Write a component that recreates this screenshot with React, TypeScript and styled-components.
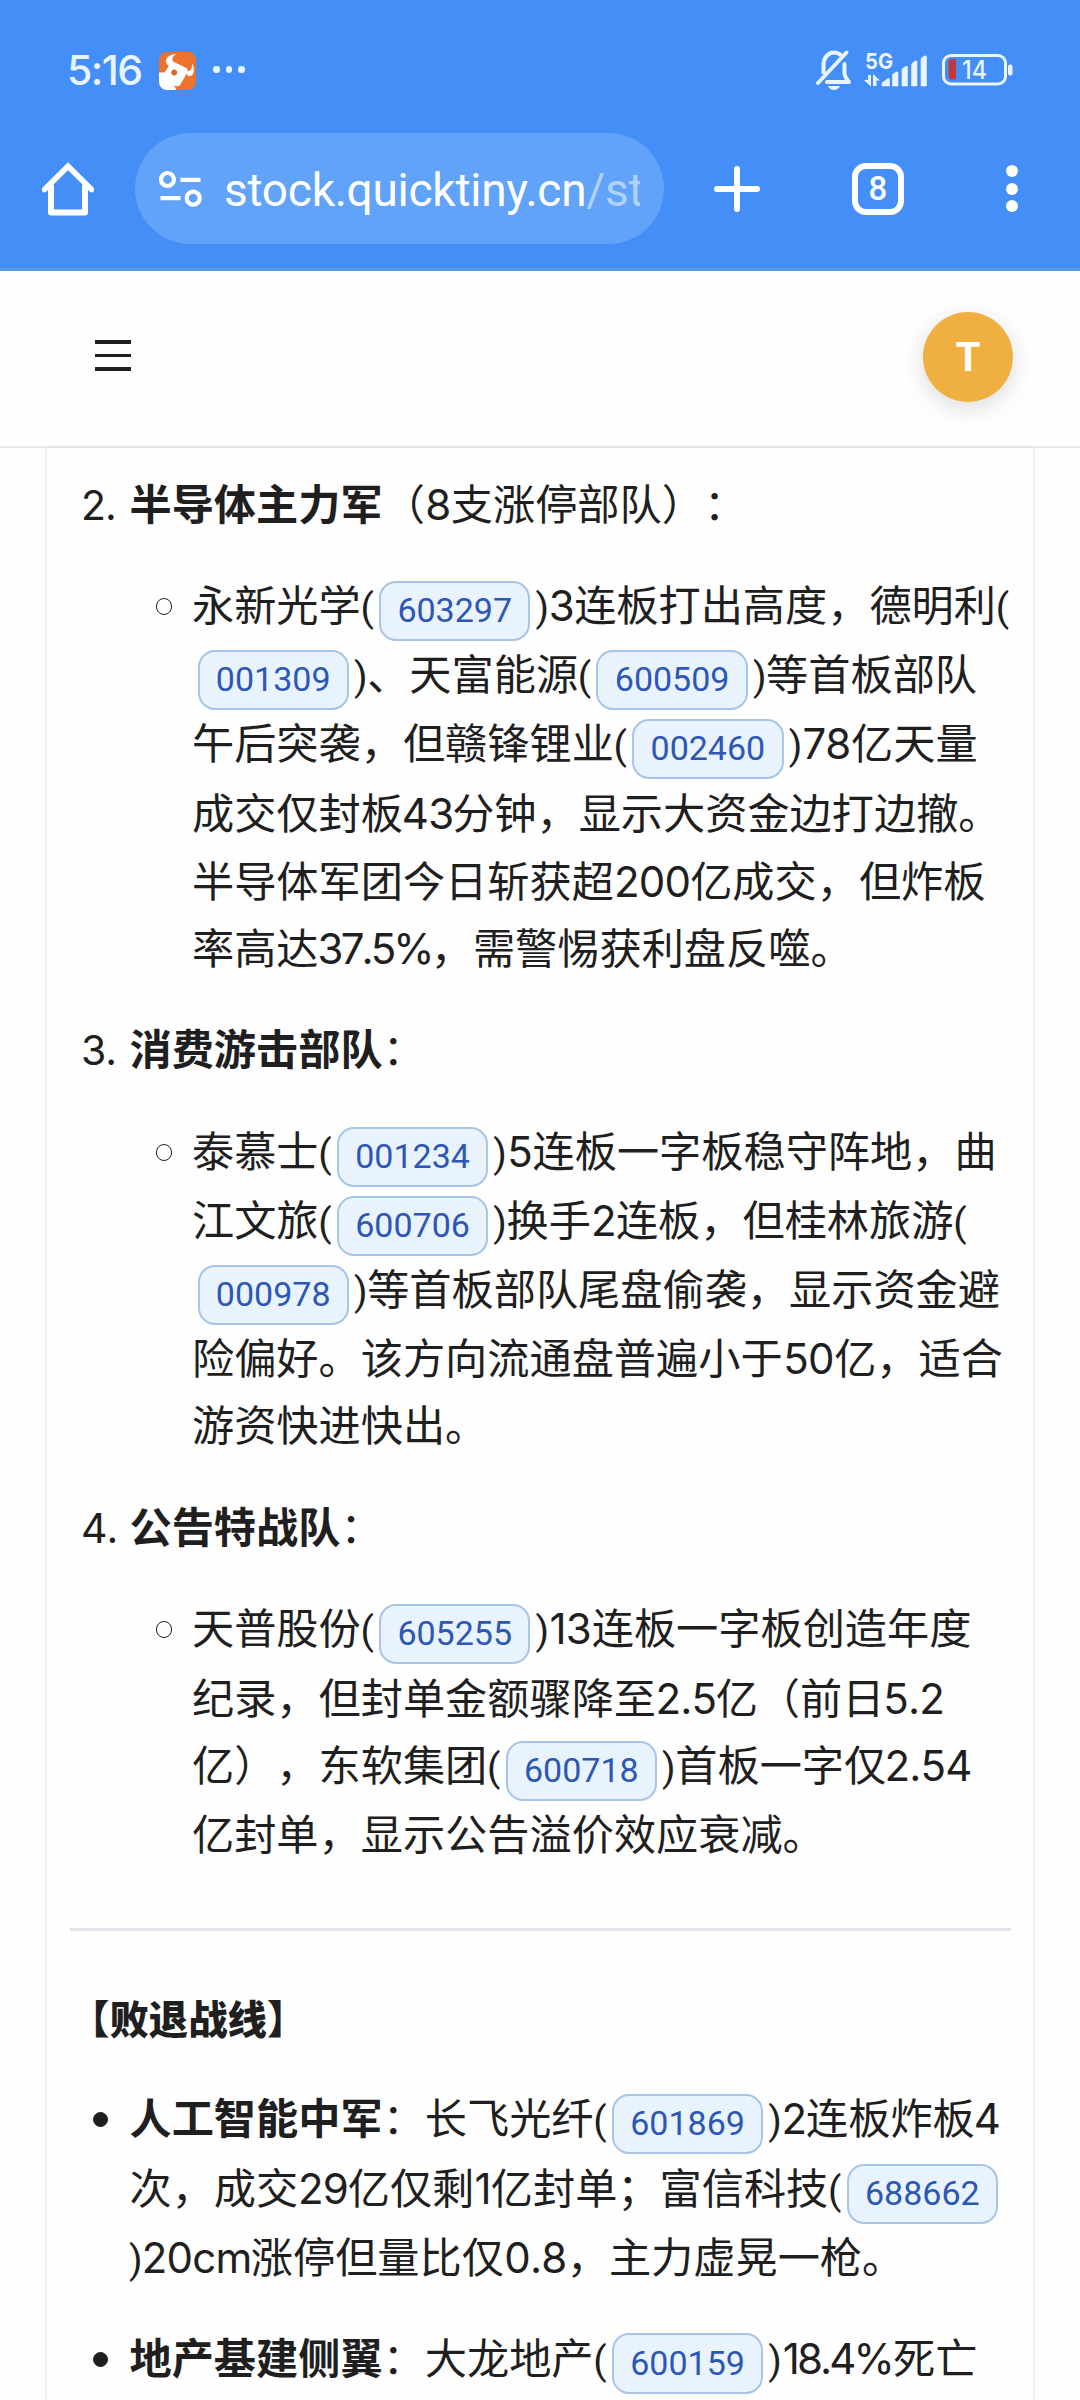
import React from 'react';
import styled, { createGlobalStyle } from 'styled-components';

const GlobalStyle = createGlobalStyle`
  * { box-sizing: border-box; }
  body { margin: 0; background: #fff; }
`;

const LATIN = '"Inter", "Roboto", sans-serif';
const CJK = '"Noto Sans CJK SC", sans-serif';

const Page = styled.div`
  width: 1080px;
  height: 2400px;
  overflow: hidden;
  display: flex;
  flex-direction: column;
  background: #fefefe;
  color: #1f1f1f;
  font-family: ${CJK};
`;

/* ---------- system + browser chrome ---------- */

const Chrome = styled.header`
  height: 271px;
  flex: none;
  background: #448ef7;
  border-bottom: 3px solid #5b98e4;
  color: #fff;
`;

const StatusBar = styled.div`
  height: 133px;
  padding: 8px 66px 0 67px;
  display: flex;
  align-items: center;
  color: #e8f4ff;
  svg { display: block; flex: none; }
`;

const Clock = styled.span`
  width: 92px;
  font: 500 41px/1 ${LATIN};
  letter-spacing: -1.5px;
`;

const MoreDots = styled.span`
  display: flex;
  gap: 6px;
  margin: -2px 0 0 17px;
  i { width: 6.5px; height: 6.5px; border-radius: 50%; background: #e8f4ff; }
`;

const StatusRight = styled.div`
  margin: -2px 0 0 auto;
  display: flex;
  align-items: center;
  gap: 12px;
`;

const Toolbar = styled.div`
  height: 111px;
  padding-left: 42px;
  display: flex;
  align-items: center;
  svg { display: block; flex: none; }
`;

const AddressBar = styled.div`
  width: 529px;
  height: 111px;
  margin-left: 41px;
  padding: 0 24px;
  border-radius: 56px;
  background: #60a3f8;
  display: flex;
  align-items: center;
`;

const Url = styled.div`
  width: 417px;
  margin: 3px 0 0 21px;
  overflow: hidden;
  white-space: nowrap;
  font: 400 46px/60px "Roboto", sans-serif;
  letter-spacing: -0.25px;
  span { color: #b0d1fb; }
`;

const TabCount = styled.div`
  width: 52px;
  height: 52px;
  margin-left: 92px;
  border: 6px solid #fff;
  border-radius: 14px;
  display: flex;
  align-items: center;
  justify-content: center;
  font: 500 33px/1 "Roboto", sans-serif;
`;

const MenuDots = styled.div`
  margin-left: 102px;
  display: flex;
  flex-direction: column;
  gap: 5.5px;
  i { width: 12px; height: 12px; border-radius: 50%; background: #fff; }
`;

/* ---------- site header ---------- */

const SiteHeader = styled.div`
  height: 177px;
  flex: none;
  padding: 0 67px 4px 95px;
  display: flex;
  align-items: center;
  justify-content: space-between;
  border-bottom: 2px solid #e7e7ec;
  background: #fefefe;
`;

const Burger = styled.div`
  width: 35.5px;
  margin-top: -2px;
  display: grid;
  gap: 10.2px;
  i { height: 3.6px; background: #1f1f1f; }
`;

const Avatar = styled.div`
  width: 90px;
  height: 90px;
  border-radius: 50%;
  background: #efaf41;
  box-shadow: 0 6px 22px rgba(0, 0, 0, 0.14);
  display: flex;
  align-items: center;
  justify-content: center;
  color: #fff;
  font: 700 39px/1 ${LATIN};
`;

/* ---------- article ---------- */

const Card = styled.main`
  flex: 1;
  margin: 0 45px;
  padding: 22px 23px 0;
  border: solid #efeff0;
  border-width: 0 2px;
  box-shadow: 0 0 8px rgba(0, 0, 0, 0.03);
`;

const BASELINE = 50;

const Line = styled.div<{ $h: number }>`
  height: ${(p) => p.$h}px;
  display: flex;
  align-items: baseline;
  white-space: pre;
  font-size: 42.2px;
  line-height: 1;
  font-kerning: none;
  text-spacing-trim: space-all;
  &::before {
    content: '';
    width: 0;
    height: ${BASELINE}px;
  }
`;

const Strong = styled.strong`
  font-weight: 700;
`;

const Ordinal = styled.span`
  width: 59.5px;
  padding-left: 11px;
  font-family: ${LATIN};
  font-size: 41px;
  font-weight: 400;
  letter-spacing: -1px;
`;

const Num = styled.span<{ $w: number; $tight?: boolean }>`
  width: ${(p) => p.$w}px;
  display: flex;
  justify-content: center;
  font-family: ${LATIN};
  font-size: 42px;
  letter-spacing: ${(p) => (p.$tight ? -2.9 : -0.8)}px;
`;

const Paren = styled.span`
  width: 12.8px;
  display: flex;
  justify-content: center;
  font-family: "Roboto", sans-serif;
  font-size: 39px;
`;

const Chip = styled.a`
  position: relative;
  top: 1px;
  width: 151.4px;
  height: 60.6px;
  margin: 0 5.5px;
  padding-top: 11.5px;
  flex: none;
  border: 2px solid #a6c5e7;
  border-radius: 17px;
  background: #e8f3fe;
  color: #2d57b5;
  text-align: center;
  font: 400 34px/32px "Roboto", sans-serif;
`;

const Entry = styled.div<{ $indent: number }>`
  display: grid;
  grid-template-columns: ${(p) => p.$indent}px 1fr;
`;

const Mark = styled.i<{ $solid?: boolean }>`
  justify-self: end;
  width: ${(p) => (p.$solid ? 15 : 16.5)}px;
  height: ${(p) => (p.$solid ? 15 : 16.5)}px;
  margin-top: ${(p) => (p.$solid ? 28 : 27.3)}px;
  margin-right: ${(p) => (p.$solid ? 22 : 20)}px;
  border-radius: 50%;
  border: 1.2px solid #1f1f1f;
  background: ${(p) => (p.$solid ? '#1f1f1f' : 'transparent')};
`;

const Divider = styled.hr`
  height: 3px;
  margin: 50px -1px 53px 0;
  border: 0;
  background: #e0e3e7;
`;

const SectionTitle = styled(Line)`
  font-size: 39.4px;
  font-weight: 900;
`;

type Part = string | { n: string; w: number } | { code: string } | { b: string };
type Row = { h: number; parts: Part[] };

const n = (text: string, w: number): Part => ({ n: text, w });
const code = (value: string): Part => ({ code: value });
const b = (text: string): Part => ({ b: text });

const renderPart = (part: Part, i: number) => {
  if (typeof part === 'string') {
    return part === '(' || part === ')' ? <Paren key={i}>{part}</Paren> : <span key={i}>{part}</span>;
  }
  if ('n' in part) return <Num key={i} $w={part.w} $tight={part.n.includes('%')}>{part.n}</Num>;
  if ('b' in part) return <Strong key={i}>{part.b}</Strong>;
  return <Chip key={i}>{part.code}</Chip>;
};

const Rows = ({ rows }: { rows: Row[] }) => (
  <div>
    {rows.map((row, i) => (
      <Line key={i} $h={row.h}>{row.parts.map(renderPart)}</Line>
    ))}
  </div>
);

const squads: { no: string; h: number; title: Part[]; rows: Row[] }[] = [
  {
    no: '2.',
    h: 101,
    title: [b('半导体主力军'), '（', n('8', 26), '支涨停部队）：'],
    rows: [
      { h: 69, parts: ['永新光学', '(', code('603297'), ')', n('3', 25.4), '连板打出高度，德明利', '('] },
      { h: 69, parts: [code('001309'), ')', '、天富能源', '(', code('600509'), ')', '等首板部队'] },
      { h: 70, parts: ['午后突袭，但赣锋锂业', '(', code('002460'), ')', n('78', 49.2), '亿天量'] },
      { h: 68, parts: ['成交仅封板', n('43', 49.2), '分钟，显示大资金边打边撤。'] },
      { h: 67, parts: ['半导体军团今日斩获超', n('200', 76.3), '亿成交，但炸板'] },
      { h: 101, parts: ['率高达', n('37.5%', 112.2), '，需警惕获利盘反噬。'] },
    ],
  },
  {
    no: '3.',
    h: 102,
    title: [b('消费游击部队'), '：'],
    rows: [
      { h: 69, parts: ['泰慕士', '(', code('001234'), ')', n('5', 26), '连板一字板稳守阵地，曲'] },
      { h: 69, parts: ['江文旅', '(', code('600706'), ')', '换手', n('2', 25), '连板，但桂林旅游', '('] },
      { h: 69, parts: [code('000978'), ')', '等首板部队尾盘偷袭，显示资金避'] },
      { h: 67, parts: ['险偏好。该方向流通盘普遍小于', n('50', 51.5), '亿，适合'] },
      { h: 102, parts: ['游资快进快出。'] },
    ],
  },
  {
    no: '4.',
    h: 101,
    title: [b('公告特战队'), '：'],
    rows: [
      { h: 70, parts: ['天普股份', '(', code('605255'), ')', n('13', 43), '连板一字板创造年度'] },
      { h: 67, parts: ['纪录，但封单金额骤降至', n('2.5', 59.6), '亿（前日', n('5.2', 58.6)] },
      { h: 68.5, parts: ['亿），东软集团', '(', code('600718'), ')', '首板一字仅', n('2.54', 83.5)] },
      { h: 78.5, parts: ['亿封单，显示公告溢价效应衰减。'] },
    ],
  },
];

const retreats: Row[][] = [
  [
    { h: 70, parts: [b('人工智能中军'), '：长飞光纤', '(', code('601869'), ')', n('2', 24.5), '连板炸板', n('4', 24)] },
    { h: 69, parts: ['次，成交', n('29', 49.5), '亿仅剩', n('1', 16.5), '亿封单；富信科技', '(', code('688662')] },
    { h: 100.5, parts: [')', n('20cm', 108.5), '涨停但量比仅', n('0.8', 62.8), '，主力虚晃一枪。'] },
  ],
  [
    { h: 76, parts: [b('地产基建侧翼'), '：大龙地产', '(', code('600159'), ')', n('18.4%', 111.5), '死亡'] },
  ],
];

const BullLogo = () => (
  <svg width="37" height="38" viewBox="0 0 37 38">
    <rect width="37" height="38" rx="8" fill="#ec722e" />
    <path
      fill="#fff"
      d="M17 2C10 2.500 6.500 6 7 10c.4 2.400 2 3 2.700 4L5.500 20.500H0V30a8 8 0 0 0 8 8h9l-.5-2-2-2.500c1.500 1 4.500 1 6.300 0L28 21l.5-4.500L14 9.500C12.500 6.500 14 4 17 2Z"
    />
    <path fill="#fff" d="M33.300 11.500c2 3.500 2 7.500.7 10.500-1.200 2.300-4 3-6.200.8l.7-4.300 2 .5c1.800-1.500 2.600-4 2.800-7.500Z" />
    <circle cx="15.200" cy="20.500" r="2.900" fill="#d9692c" />
  </svg>
);

const BellOff = () => (
  <svg width="36" height="40" viewBox="0 0 36 40" fill="none" stroke="#e8f4ff" strokeWidth="4">
    <path d="M7.500 24v-9c0-7 4.500-12.500 10.500-12.500 3 0 5.500 1.200 7.300 3" />
    <path d="M28.500 14v9c0 3 1.500 5.500 4.500 9H11" strokeLinejoin="round" strokeLinecap="round" />
    <path d="M30.500 2.500 2 33" strokeLinecap="round" strokeWidth="3.800" />
    <path d="M12 36h12c-1 2.500-3.500 4-6 4s-5-1.500-6-4Z" fill="#e8f4ff" stroke="none" />
  </svg>
);

const Signal = () => (
  <svg width="66" height="56" viewBox="0 -9 66 56" fill="#e8f4ff">
    <text x="1" y="17.500" fontFamily="Inter, sans-serif" fontWeight="700" fontSize="22" textLength="28" lengthAdjust="spacingAndGlyphs">5G</text>
    <path d="M4 24h3v11.500L0 29h4ZM9 23l7 6.500h-3.500V35H9Z" />
    <path d="M18 35v-3l6-4.500q1.500-.8 1.500 1V35ZM28.500 35V23.500l3.500-2.500h2v14ZM38 35V18l3.500-2.500h2V35ZM47.500 35V13l3.500-3h2v25ZM57 35V7.500L60.500 5H62.500v30Z" stroke="#e8f4ff" strokeWidth=".6" strokeLinejoin="round" />
  </svg>
);

const Battery = () => (
  <svg width="72" height="32" viewBox="0 0 72 32">
    <rect x="1.500" y="1.500" width="62" height="28.500" rx="7.500" fill="none" stroke="#e8f4ff" strokeWidth="3" />
    <path d="M14 5v20.500h-4a3.500 3.500 0 0 1-3.500-3.500V8.500A3.500 3.500 0 0 1 10 5Z" fill="#bf3a38" />
    <rect x="66" y="10.500" width="4.500" height="11" rx="2" fill="#e8f4ff" />
    <text x="32.500" y="25" textAnchor="middle" fill="#e8f4ff" fontFamily="Inter, sans-serif" fontWeight="500" fontSize="25" textLength="25" lengthAdjust="spacingAndGlyphs">14</text>
  </svg>
);

const HomeIcon = () => (
  <svg width="52" height="54" viewBox="0 0 52 54" fill="none" stroke="#fff" strokeWidth="6" strokeLinejoin="round">
    <path d="M2.500 27.500 26 4.200l23.500 23.300" strokeLinejoin="miter" strokeLinecap="round" strokeWidth="5.500" />
    <path d="M9 23v27.500h34V23" />
  </svg>
);

const SiteInfoIcon = () => (
  <svg width="44" height="38" viewBox="0 0 44 38" fill="none" stroke="#fff" strokeWidth="4.200">
    <circle cx="8.500" cy="9.500" r="6.500" />
    <path d="M21.500 9.800h20M1.500 28.200h20" />
    <circle cx="34.200" cy="28.200" r="6.500" />
  </svg>
);

const PlusIcon = styled(({ className }: { className?: string }) => (
  <svg className={className} width="46" height="46" viewBox="0 0 46 46" stroke="#fff" strokeWidth="6" strokeLinecap="round">
    <path d="M23 3v40M3 23h40" />
  </svg>
))`
  margin-left: 50px;
`;

export default function App() {
  return (
    <Page>
      <GlobalStyle />
      <Chrome>
        <StatusBar>
          <Clock>5:16</Clock>
          <BullLogo />
          <MoreDots><i /><i /><i /></MoreDots>
          <StatusRight>
            <BellOff />
            <Signal />
            <Battery />
          </StatusRight>
        </StatusBar>
        <Toolbar>
          <HomeIcon />
          <AddressBar>
            <SiteInfoIcon />
            <Url>stock.quicktiny.cn<span>/str</span></Url>
          </AddressBar>
          <PlusIcon />
          <TabCount>8</TabCount>
          <MenuDots><i /><i /><i /></MenuDots>
        </Toolbar>
      </Chrome>

      <SiteHeader>
        <Burger><i /><i /><i /></Burger>
        <Avatar>T</Avatar>
      </SiteHeader>

      <Card>
        {squads.map((squad) => (
          <section key={squad.no}>
            <Line $h={squad.h}>
              <Ordinal>{squad.no}</Ordinal>
              {squad.title.map(renderPart)}
            </Line>
            <Entry $indent={122}>
              <Mark />
              <Rows rows={squad.rows} />
            </Entry>
          </section>
        ))}
        <Divider />
        <SectionTitle $h={100}>【败退战线】</SectionTitle>
        {retreats.map((rows, i) => (
          <Entry key={i} $indent={59.5}>
            <Mark $solid />
            <Rows rows={rows} />
          </Entry>
        ))}
      </Card>
    </Page>
  );
}
